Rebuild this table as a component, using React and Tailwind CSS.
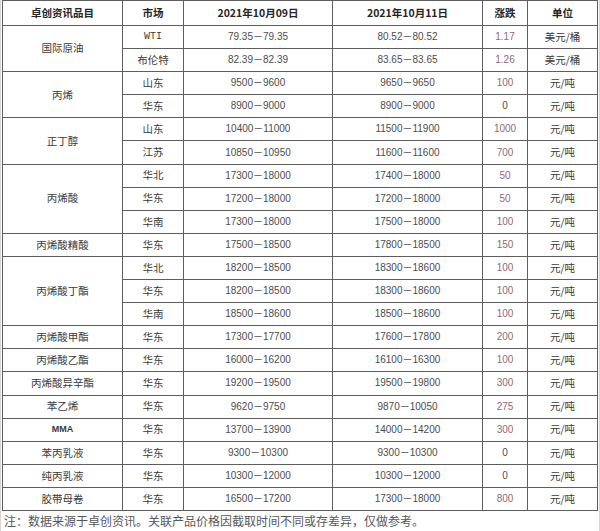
const GROUPS = [
  {
    name: '国际原油',
    unit: '美元/桶',
    rows: [
      ['WTI', '79.35－79.35', '80.52－80.52', '1.17'],
      ['布伦特', '82.39－82.39', '83.65－83.65', '1.26'],
    ],
  },
  {
    name: '丙烯',
    rows: [
      ['山东', '9500－9600', '9650－9650', '100'],
      ['华东', '8900－9000', '8900－9000', '0'],
    ],
  },
  {
    name: '正丁醇',
    rows: [
      ['山东', '10400－11000', '11500－11900', '1000'],
      ['江苏', '10850－10950', '11600－11600', '700'],
    ],
  },
  {
    name: '丙烯酸',
    rows: [
      ['华北', '17300－18000', '17400－18000', '50'],
      ['华东', '17200－18000', '17200－18000', '50'],
      ['华南', '17300－18000', '17500－18000', '100'],
    ],
  },
  { name: '丙烯酸精酸', rows: [['华东', '17500－18500', '17800－18500', '150']] },
  {
    name: '丙烯酸丁酯',
    rows: [
      ['华北', '18200－18500', '18300－18600', '100'],
      ['华东', '18200－18500', '18300－18600', '100'],
      ['华南', '18500－18600', '18500－18600', '100'],
    ],
  },
  { name: '丙烯酸甲酯', rows: [['华东', '17300－17700', '17600－17800', '200']] },
  { name: '丙烯酸乙酯', rows: [['华东', '16000－16200', '16100－16300', '100']] },
  { name: '丙烯酸异辛酯', rows: [['华东', '19200－19500', '19500－19800', '300']] },
  { name: '苯乙烯', rows: [['华东', '9620－9750', '9870－10050', '275']] },
  { name: 'MMA', rows: [['华东', '13700－13900', '14000－14200', '300']] },
  { name: '苯丙乳液', rows: [['华东', '9300－10300', '9300－10300', '0']] },
  { name: '纯丙乳液', rows: [['华东', '10300－12000', '10300－12000', '0']] },
  { name: '胶带母卷', rows: [['华东', '16500－17200', '17300－18000', '800']] },
];

const SPAN = { 1: '', 2: 'row-span-2', 3: 'row-span-3' };

const cjk = "font-['Noto_Sans_CJK_SC',sans-serif]";
const num = "font-['Liberation_Sans','Noto_Sans_CJK_SC',sans-serif]";

function Cell({ className = '', children }) {
  return (
    <div className={`bg-white flex items-center justify-center leading-none ${className}`}>
      {children}
    </div>
  );
}

export default function App() {
  return (
    <div className="w-[600px] h-[531px] bg-white border-x border-[#d4d4d4] overflow-hidden">
      <div className="ml-px w-[596px] h-[511px] grid grid-cols-[119px_60px_148px_149px_44px_69px] grid-rows-[24px_repeat(21,minmax(0,1fr))] gap-px p-px bg-[#5e5e5e]">
        {/* Header */}
        {['卓创资讯品目', '市场', '2021年10月09日', '2021年10月11日', '涨跌', '单位'].map((h) => (
          <Cell key={h} className={`${cjk} font-bold text-[10.5px] text-[#262626]`}>
            {h}
          </Cell>
        ))}

        {GROUPS.map((g) =>
          g.rows.map((r, i) => (
            <div key={g.name + i} className="contents">
              {i === 0 && (
                <Cell className={`${SPAN[g.rows.length]} ${g.name === 'MMA' ? num + ' font-bold text-[9px]' : cjk + ' text-[10.5px]'} text-[#3a3a3a]`}>
                  {g.name}
                </Cell>
              )}
              <Cell className={`${r[0] === 'WTI' ? "font-['Liberation_Mono',monospace] text-[10px]" : cjk + ' text-[10.5px]'} text-[#3a3a3a]`}>
                {r[0]}
              </Cell>
              <Cell className={`${num} text-[10px] text-[#4d4d4d]`}>{r[1]}</Cell>
              <Cell className={`${num} text-[10px] text-[#4d4d4d]`}>{r[2]}</Cell>
              <Cell className={`${num} text-[10px] ${r[3] === '0' ? 'text-[#4d4d4d]' : 'text-[#92697a]'}`}>
                {r[3]}
              </Cell>
              <Cell className={`${cjk} text-[10.5px] text-[#3a3a3a]`}>{g.unit || '元/吨'}</Cell>
            </div>
          ))
        )}
      </div>

      {/* Footnote */}
      <div className={`h-[20px] flex items-center pl-[3px] ${cjk} text-[12px] text-[#585858]`}>
        注：数据来源于卓创资讯。关联产品价格因截取时间不同或存差异，仅做参考。
      </div>
    </div>
  );
}
